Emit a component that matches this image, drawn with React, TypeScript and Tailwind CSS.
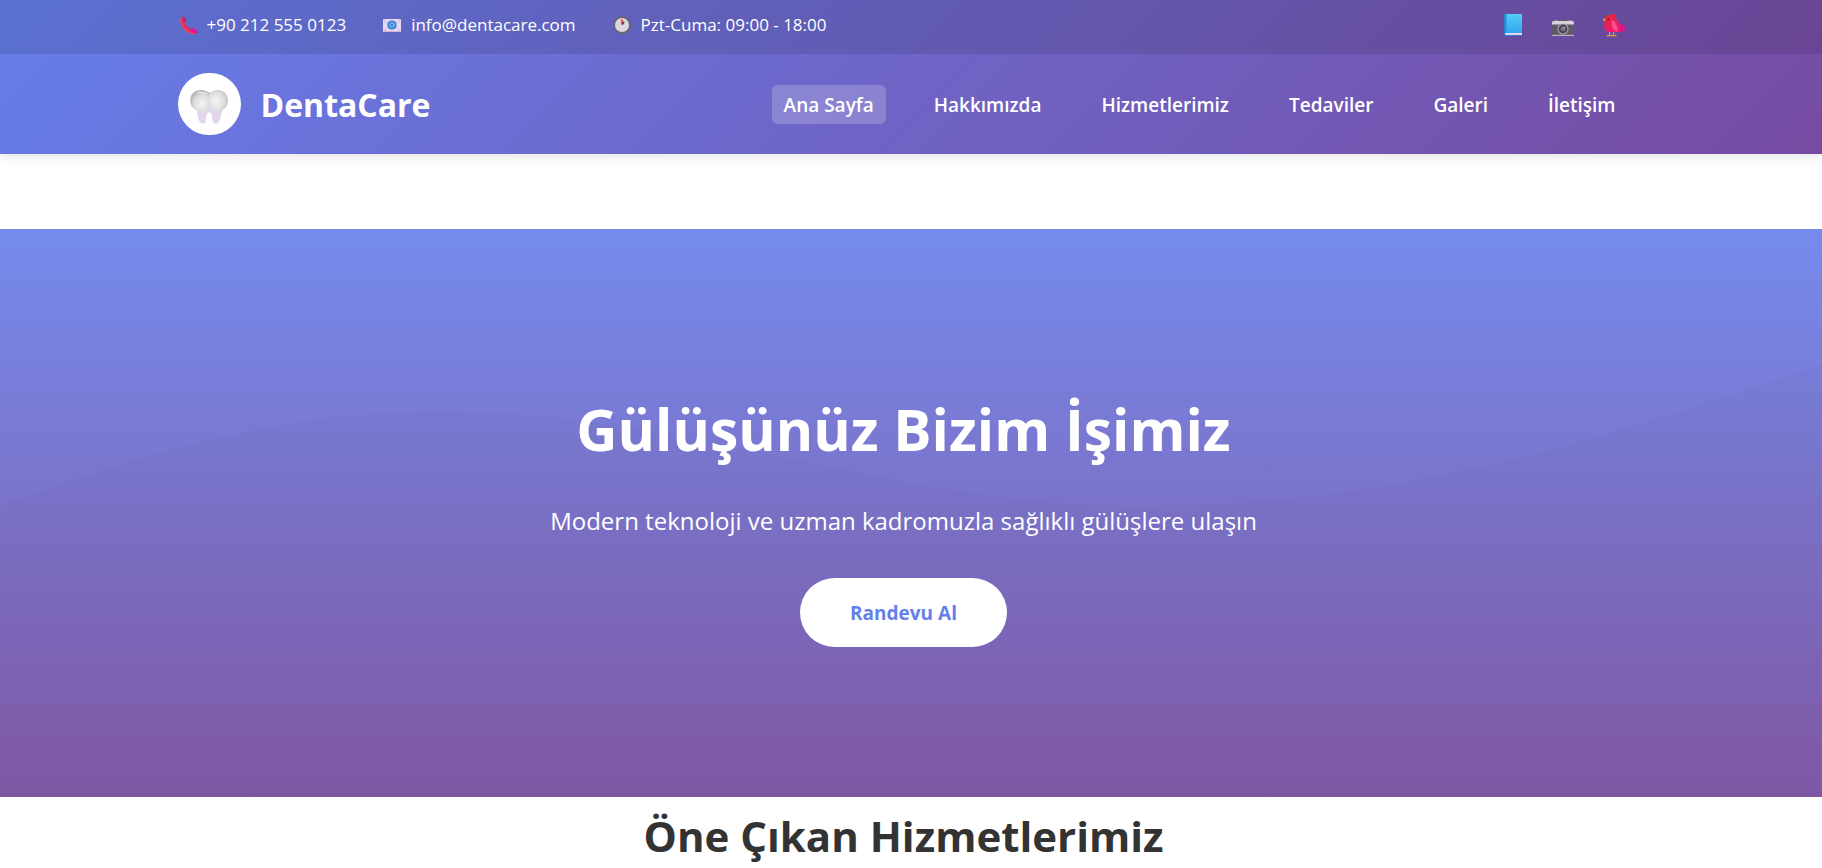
import { useState } from 'react';

const PhoneIcon = () => (
  <svg viewBox="0 0 20 20" className="h-5 w-5" aria-hidden="true">
    <path d="M3.2 3.2 5.2 1.4 8.2 4.8 6.4 7.1C7.4 10 10 12.7 12.8 14.2L15.2 13 19 16 18.6 18.3C14.9 19.6 10.1 17.6 6.8 14 3.3 10.5 2 6.5 3.2 3.2Z" fill="#e8285c" />
    <path d="M3.2 3.2C2.2 7 3.8 11 6.8 14 9.8 17 13.6 18.8 17 18.7" fill="none" stroke="#f5475c" strokeWidth="1.2" />
    <path d="M12.8 14.2 15.2 13 19 16 18.6 18.3 14.6 17Z" fill="#e0129a" />
    <path d="M5.2 1.4 8.2 4.8 6.4 7.1 4.8 4Z" fill="#b81f6c" />
  </svg>
);

const MailIcon = () => (
  <svg viewBox="0 0 20 20" className="h-5 w-5" aria-hidden="true">
    <rect x="1" y="4" width="18" height="13" fill="#e6daf2" />
    <path d="M1 17 7 11M19 17 13 11M1 4 10 12 19 4" stroke="#c9b4de" strokeWidth="1" fill="none" />
    <path d="M1 16.5H19" stroke="#d3b0dc" />
    <circle cx="10" cy="10" r="4.6" fill="#2b7cd3" />
    <circle cx="10" cy="10" r="1.6" fill="none" stroke="#a9d3f7" strokeWidth="0.7" />
    <path d="M11.6 8.6V10.8C11.8 12 13.2 11.6 13 9.8A3 3 0 1 0 11.6 12.6" fill="none" stroke="#a9d3f7" strokeWidth="0.5" />
  </svg>
);

const ClockIcon = () => (
  <svg viewBox="0 0 20 20" className="h-5 w-5" aria-hidden="true">
    <circle cx="10" cy="10" r="9" fill="#6b6570" />
    <circle cx="10" cy="10" r="7" fill="#dcd8e0" />
    <path d="M10 9.5V4.4" stroke="#f0334f" strokeWidth="1.8" />
    <path d="M10.2 9.6 12.2 6.8" stroke="#3a3340" strokeWidth="1.3" />
  </svg>
);

const BookIcon = () => (
  <svg viewBox="0 0 24 24" className="h-6 w-6" aria-hidden="true">
    <defs>
      <linearGradient id="book" x1="0" y1="0" x2="0" y2="1">
        <stop offset="0" stopColor="#52cdf5" />
        <stop offset="1" stopColor="#35a6ee" />
      </linearGradient>
    </defs>
    <path d="M4 1H21V22H4C3.4 22 3 21.6 3 21V2C3 1.4 3.4 1 4 1Z" fill="#2b86cf" />
    <path d="M5 1H21V20H5Z" fill="url(#book)" />
    <path d="M4 20H21V22H4.5Z" fill="#e8dcf5" />
    <path d="M3.4 22.4H21" stroke="#2f88cc" strokeWidth="0.8" />
    <path d="M5.3 1V20" stroke="#3b97d8" strokeWidth="0.8" />
  </svg>
);

const CameraIcon = () => (
  <svg viewBox="0 0 24 24" className="h-6 w-6" aria-hidden="true">
    <path d="M1 9 2.5 7.5H9L10.5 6.5H14L15.5 7.5H21.5L23 9V23H1Z" fill="#5f5a66" />
    <path d="M1 9 2.5 8H21.5L23 9V11.5H1Z" fill="#d7d2dd" />
    <path d="M3.5 8V7H7V8M17.5 8V7H21V8" fill="#8a8591" />
    <path d="M1 22.4H23" stroke="#b9b3c2" strokeWidth="1.2" />
    <circle cx="12" cy="16" r="5.6" fill="#a39eab" />
    <circle cx="12" cy="16" r="4.4" fill="#4a4453" />
    <circle cx="12" cy="16" r="2.4" fill="#77718a" />
    <circle cx="13.3" cy="14.8" r="0.8" fill="#c9c4d8" />
  </svg>
);

const BirdIcon = () => (
  <svg viewBox="0 0 24 24" className="h-6 w-6" aria-hidden="true">
    <defs>
      <linearGradient id="bird" x1="0" y1="0" x2="0.6" y2="1">
        <stop offset="0" stopColor="#e8262b" />
        <stop offset="1" stopColor="#ee1a78" />
      </linearGradient>
    </defs>
    <path d="M14 15 20 12 23.5 11V18.5L17 19 14 19Z" fill="#e6127f" />
    <path d="M4 5C5 2 9 1 15 1.2L13.8 3.6C16.5 6 17.6 9 18.4 13L18.6 19H8C4 18.5 2.6 15.5 3.4 12 3.8 9.8 3.2 7.4 4 5Z" fill="url(#bird)" />
    <path d="M11 7.5C14.5 8 15.6 12 16.8 18.8 12.4 18 10 13 11 7.5Z" fill="#ff4f8e" />
    <path d="M4 5.6 1.6 6.4 4 8.2Z" fill="#f5b63c" />
    <circle cx="7.4" cy="6.4" r="0.9" fill="#5b1030" />
    <path d="M8.6 19V22.4M12.6 19V22.4M5.5 22.6H15.5" stroke="#e39a2d" strokeWidth="1.2" fill="none" />
  </svg>
);

const ToothIcon = () => (
  <svg viewBox="0 0 40 36" className="h-9 w-10" aria-hidden="true">
    <defs>
      <radialGradient id="crownLeft" cx="0.62" cy="0.66" r="0.72">
        <stop offset="0" stopColor="#f6f5f6" />
        <stop offset="0.6" stopColor="#dcdbdc" />
        <stop offset="1" stopColor="#a9a8aa" />
      </radialGradient>
      <radialGradient id="crownRight" cx="0.35" cy="0.55" r="0.72">
        <stop offset="0" stopColor="#f8f7f8" />
        <stop offset="0.6" stopColor="#dfdedf" />
        <stop offset="1" stopColor="#b9b8ba" />
      </radialGradient>
      <linearGradient id="toothRoots" x1="0" y1="0" x2="0" y2="1">
        <stop offset="0" stopColor="#e0dce4" />
        <stop offset="1" stopColor="#e3d3ee" />
      </linearGradient>
    </defs>
    <path d="M5 17C9 20 8 27 10 31.5 11 34.4 14.5 35.4 15.8 34 17.6 31.5 16.4 23.6 20.4 23.2 24 23.6 22.6 31.5 24.4 34 26 35.4 29.6 34.2 30.6 31.5 32.4 26 33 21 36 16L20 8Z" fill="url(#toothRoots)" />
    <path d="M12 1C16 .8 17.6 3 20.5 3.6V18C18.6 21.4 15 22.6 11 22 5 21.4 1.2 17 1.2 11.4 1.2 5 6 1 12 1Z" fill="url(#crownLeft)" />
    <path d="M20.5 3.6C23 3 25 .8 29 1 35 1.2 39 5.6 39 11.6 39 17.8 34.4 22 29.6 22 24 22 20.5 17 20.5 12Z" fill="url(#crownRight)" />
    <path d="M9 3.6C12 2.8 15 3.6 17.6 5" stroke="#f4f4f4" strokeWidth="1" fill="none" strokeLinecap="round" />
  </svg>
);

const contacts = [
  { icon: <PhoneIcon />, label: '+90 212 555 0123', href: 'tel:+902125550123' },
  { icon: <MailIcon />, label: 'info@dentacare.com', href: 'mailto:info@dentacare.com' },
  { icon: <ClockIcon />, label: 'Pzt-Cuma: 09:00 - 18:00' },
];

const socials = [
  { icon: <BookIcon />, name: 'Facebook' },
  { icon: <CameraIcon />, name: 'Instagram' },
  { icon: <BirdIcon />, name: 'Twitter' },
];

const links = ['Ana Sayfa', 'Hakkımızda', 'Hizmetlerimiz', 'Tedaviler', 'Galeri', 'İletişim'];

const Header = () => {
  const [active, setActive] = useState('Ana Sayfa');

  return (
    <header className="relative bg-linear-135/srgb from-[#667eea] to-[#764ba2] text-white shadow-[0_2px_12px_rgba(0,0,0,0.12)]">
      <div className="bg-black/10 pr-[15px]">
        <div className="mx-auto flex h-[54px] max-w-[1452px] items-center justify-between">
          <ul className="flex items-center gap-9 pb-1 text-[17px]">
            {contacts.map((item) => (
              <li key={item.label} className="flex items-center gap-[9px]">
                {item.icon}
                {item.href ? <a href={item.href}>{item.label}</a> : <span>{item.label}</span>}
              </li>
            ))}
          </ul>
          <div className="flex items-center gap-[26px] pr-[5px] pb-1">
            {socials.map((item) => (
              <a key={item.name} href="#" aria-label={item.name}>
                {item.icon}
              </a>
            ))}
          </div>
        </div>
      </div>

      <div className="pr-[15px]">
        <div className="mx-auto flex h-[100px] max-w-[1452px] items-center justify-between">
          <a href="#" className="flex items-center gap-5">
            <span className="flex h-[62px] w-[63px] items-center justify-center rounded-full bg-white pt-1.5">
              <ToothIcon />
            </span>
            <span className="pt-0.5 text-[32px] font-bold">DentaCare</span>
          </a>
          <nav className="flex items-center gap-9 pr-0.5">
            {links.map((link) => (
              <a
                key={link}
                href="#"
                onClick={() => setActive(link)}
                className={`rounded-md px-3 pt-[5px] pb-[3px] text-[19px] leading-[31px] font-semibold ${
                  active === link ? 'bg-white/20' : ''
                }`}
              >
                {link}
              </a>
            ))}
          </nav>
        </div>
      </div>
    </header>
  );
};

const Hero = () => (
  <section className="relative mt-[75px] bg-linear-to-b/srgb from-[#758bec] to-[#8159a6] py-[150px] pr-[15px] text-center text-white">
    <svg
      viewBox="0 0 1822 568"
      preserveAspectRatio="none"
      className="absolute inset-0 h-full w-full"
      aria-hidden="true"
    >
      <path
        d="M0 277C150 221 290 182 441 182C690 182 890 277 1143 277C1400 277 1600 211 1822 135V568H0Z"
        fill="#000000"
        fillOpacity="0.015"
      />
    </svg>
    <div className="relative">
      <h1 className="text-[57px] leading-[101px] font-bold">Gülüşünüz Bizim İşimiz</h1>
      <p className="mt-5 text-2xl leading-[42px]">
        Modern teknoloji ve uzman kadromuzla sağlıklı gülüşlere ulaşın
      </p>
      <button
        type="button"
        className="mt-9 cursor-pointer rounded-full bg-white px-[50px] pt-[21px] pb-[19px] text-[19px] leading-[29px] font-bold text-[#667eea]"
      >
        Randevu Al
      </button>
    </div>
  </section>
);

const App = () => {
  return (
    <div className="min-h-screen overflow-x-hidden bg-white font-['Open_Sans',sans-serif]">
      <Header />
      <main>
        <Hero />
        <section className="pr-[15px] text-center">
          <h2 className="text-[42px] leading-[78px] font-bold text-[#333333]">Öne Çıkan Hizmetlerimiz</h2>
        </section>
      </main>
    </div>
  );
};

export default App;
